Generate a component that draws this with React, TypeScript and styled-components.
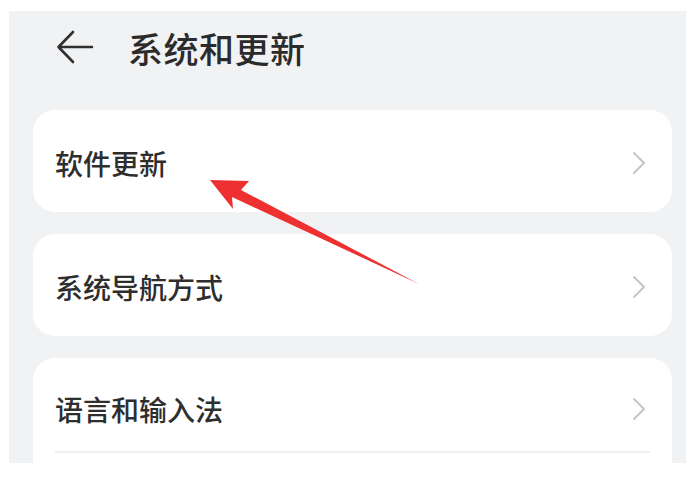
import React from 'react'
import styled, { createGlobalStyle } from 'styled-components'

const GlobalStyle = createGlobalStyle`
  html, body {
    margin: 0;
    padding: 0;
    background: #ffffff;
    font-family: "Noto Sans CJK SC", "Noto Sans", sans-serif;
  }
`

type Item = { label: string; divider?: boolean }

const items: Item[][] = [
  [{ label: '软件更新' }],
  [{ label: '系统导航方式' }],
  [{ label: '语言和输入法', divider: true }],
]

export default function App() {
  return (
    <>
      <GlobalStyle />
      <Page>
        <Panel>
          <Header>
            <BackButton aria-label="返回">
              <svg width="38" height="36" viewBox="0 0 38 36" fill="none">
                <path
                  d="M36 18H3M17 3L2.5 18L17 33"
                  stroke="#2f2f2f"
                  strokeWidth="2.6"
                  strokeLinecap="round"
                  strokeLinejoin="round"
                />
              </svg>
            </BackButton>
            <Title>系统和更新</Title>
          </Header>

          <CardList>
            {items.map((group, i) => (
              <Card key={i} continues={group.some((item) => item.divider)}>
                {group.map((item) => (
                  <Row key={item.label} divider={item.divider}>
                    <RowLabel>{item.label}</RowLabel>
                    <Chevron width="14" height="24" viewBox="0 0 14 24" fill="none">
                      <path
                        d="M2 2L12 12L2 22"
                        stroke="#c6c6c6"
                        strokeWidth="2"
                        strokeLinecap="round"
                        strokeLinejoin="round"
                      />
                    </Chevron>
                  </Row>
                ))}
              </Card>
            ))}
          </CardList>

          <Pointer width="686" height="483" viewBox="0 0 686 483">
            <polygon
              points="210,180 249,181 241,190 419,284 232,197 233,209"
              fill="#ee3030"
            />
          </Pointer>
        </Panel>
      </Page>
    </>
  )
}

const Page = styled.div`
  width: 686px;
  height: 483px;
  padding: 11px 0 0 9px;
  box-sizing: border-box;
  position: relative;
`

const Panel = styled.div`
  height: 452px;
  background: #f1f2f4;
  overflow: hidden;
`

const Header = styled.div`
  display: flex;
  align-items: center;
  height: 72px;
  padding-left: 47px;
`

const BackButton = styled.div`
  display: flex;
  align-items: center;
  width: 38px;
  height: 36px;
  margin-right: 34px;
`

const Title = styled.h1`
  margin: 0;
  font-size: 35px;
  font-weight: 500;
  color: #2b2b2b;
  letter-spacing: 0.5px;
`

const CardList = styled.div`
  display: flex;
  flex-direction: column;
  gap: 22px;
  margin: 27px 14px 0 24px;
`

const Card = styled.div<{ continues?: boolean }>`
  background: #ffffff;
  border-radius: 22px;
  padding: 0 22px ${(p) => (p.continues ? '40px' : '0')};
`

const Row = styled.div<{ divider?: boolean }>`
  display: flex;
  align-items: center;
  justify-content: space-between;
  height: ${(p) => (p.divider ? '95px' : '102px')};
  padding-top: ${(p) => (p.divider ? '9px' : '3px')};
  box-sizing: border-box;
  border-bottom: ${(p) => (p.divider ? '2px solid #eeeff1' : 'none')};
`

const RowLabel = styled.span`
  font-size: 28px;
  font-weight: 500;
  color: #2e2e2e;
`

const Chevron = styled.svg`
  margin-right: 4px;
`

const Pointer = styled.svg`
  position: absolute;
  left: 0;
  top: 0;
  pointer-events: none;
`
